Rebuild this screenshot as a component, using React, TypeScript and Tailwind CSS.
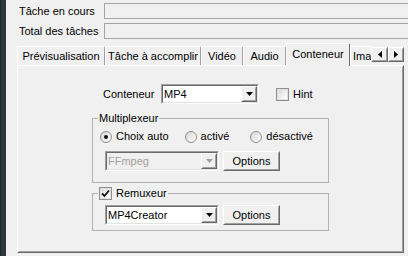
import React from "react";

function Raised({ children, className = "" }: { children?: React.ReactNode; className?: string }) {
  return (
    <div className={"border border-t-white border-l-white border-r-[#696969] border-b-[#696969] bg-[#f0f0f0] " + className}>
      <div className="w-full h-full border border-t-[#f0f0f0] border-l-[#f0f0f0] border-r-[#a0a0a0] border-b-[#a0a0a0] flex items-center justify-center">
        {children}
      </div>
    </div>
  );
}

function Arrow({ dir, color = "#000" }: { dir: "down" | "left" | "right"; color?: string }) {
  if (dir === "down")
    return (
      <svg width="7" height="4" viewBox="0 0 7 4">
        <path d="M0 0H7L3.5 4Z" fill={color} />
      </svg>
    );
  if (dir === "left")
    return (
      <svg width="4" height="7" viewBox="0 0 4 7">
        <path d="M4 0V7L0 3.5Z" fill={color} />
      </svg>
    );
  return (
    <svg width="4" height="7" viewBox="0 0 4 7">
      <path d="M0 0V7L4 3.5Z" fill={color} />
    </svg>
  );
}

function Combo({ value, width, disabled = false }: { value: string; width: string; disabled?: boolean }) {
  return (
    <div className={"h-[20px] border border-t-[#a0a0a0] border-l-[#a0a0a0] border-r-white border-b-white " + width}>
      <div className="h-full border border-t-[#696969] border-l-[#696969] border-r-[#e3e3e3] border-b-[#e3e3e3] flex items-stretch bg-white">
        <div className={"flex-1 flex items-center pl-[1px] " + (disabled ? "text-[#a0a0a0] bg-[#f0f0f0]" : "")}>{value}</div>
        <Raised className="w-[16px]">
          <Arrow dir="down" color={disabled ? "#a0a0a0" : "#000"} />
        </Raised>
      </div>
    </div>
  );
}

function Radio({ checked }: { checked?: boolean }) {
  return (
    <div className="w-[12px] h-[12px] rounded-full border border-[#8e8f8f] bg-gradient-to-br from-[#d6d6d6] to-white flex items-center justify-center">
      {checked && <div className="w-[4px] h-[4px] rounded-full bg-[#111]" />}
    </div>
  );
}

function Check({ checked }: { checked?: boolean }) {
  return (
    <div className="w-[13px] h-[13px] border border-[#8e8f8f] bg-white flex items-center justify-center">
      <div className="w-[11px] h-[11px] border border-[#e0e0e0] bg-gradient-to-br from-[#dcdcdc] to-white flex items-center justify-center">
        {checked && (
          <svg width="9" height="9" viewBox="0 0 9 9">
            <path d="M1 4.5L3.5 7L8 1.5" stroke="#111" strokeWidth="1.8" fill="none" />
          </svg>
        )}
      </div>
    </div>
  );
}

function Tab({ label, w }: { label: string; w: string }) {
  return (
    <div className={"h-[19px] flex items-center justify-center border-t border-l border-r border-t-white border-l-white border-r-[#a0a0a0] rounded-t-[2px] " + w}>
      <span className="whitespace-nowrap">{label}</span>
    </div>
  );
}

export default function App() {
  return (
    <div className="w-[408px] h-[256px] bg-[#f0f0f0] flex overflow-hidden text-[11px] leading-[13px] text-black font-['Liberation_Sans',Arial,sans-serif]">
      <div className="w-[6px] shrink-0 bg-[#2b3641] border-l border-[#1e262e]" />
      <div className="flex-1 flex flex-col pl-[13px] pt-[3px] min-w-0">
        <div className="flex h-[16px] items-center">
          <div className="w-[85px] shrink-0">Tâche en cours</div>
          <div className="flex-1 h-[16px] border border-r-0 border-[#a5a5a5] bg-[#f0f0f0]" />
        </div>
        <div className="flex h-[16px] items-center mt-[4px]">
          <div className="w-[85px] shrink-0">Total des tâches</div>
          <div className="flex-1 h-[16px] border border-r-0 border-[#a5a5a5] bg-[#f0f0f0]" />
        </div>

        <div className="ml-[-2px] w-[387px] mt-[4px] flex flex-col">
          <div className="h-[22px] flex items-end">
            <Tab label="Prévisualisation" w="w-[88px]" />
            <Tab label="Tâche à accomplir" w="w-[96px]" />
            <Tab label="Vidéo" w="w-[42px]" />
            <Tab label="Audio" w="w-[43px]" />
            <div className="relative z-10 mb-[-1px] h-[23px] w-[64px] flex justify-center pt-[4px] border-t border-l border-r border-t-white border-l-white border-r-[#696969] bg-[#f0f0f0] rounded-t-[2px]">
              <span>Conteneur</span>
            </div>
            <div className="h-[19px] w-[21px] flex items-center pl-[2px] border-t border-l border-t-white border-l-white">
              <span className="whitespace-nowrap">Ima</span>
            </div>
            <div className="self-start mt-[4px] flex">
              <Raised className="w-[17px] h-[15px]">
                <Arrow dir="left" />
              </Raised>
              <Raised className="w-[16px] h-[15px]">
                <Arrow dir="right" />
              </Raised>
            </div>
          </div>

          <div className="h-[188px] border border-t-white border-l-white border-r-[#696969] border-b-[#696969]">
            <div className="h-full border border-t-[#f0f0f0] border-l-[#f0f0f0] border-r-[#a0a0a0] border-b-[#a0a0a0] flex flex-col items-center pt-[17px]">
              <div className="w-[237px] flex items-center h-[20px]">
                <div className="ml-[11px] w-[58px]">Conteneur</div>
                <Combo value="MP4" width="w-[98px]" />
                <div className="ml-[17px]">
                  <Check />
                </div>
                <div className="ml-[4px]">Hint</div>
              </div>

              <fieldset className="w-[237px] mt-[8px] border border-[#b4b4b4] pb-[11px]">
                <legend className="ml-[5px] px-[1px]">Multiplexeur</legend>
                <div className="flex items-center mt-[5px] h-[13px] pl-[7px]">
                  <Radio checked />
                  <span className="ml-[4px]">Choix auto</span>
                  <div className="ml-[16px]">
                    <Radio />
                  </div>
                  <span className="ml-[4px]">activé</span>
                  <div className="ml-[21px]">
                    <Radio />
                  </div>
                  <span className="ml-[4px]">désactivé</span>
                </div>
                <div className="flex mt-[8px] pl-[12px]">
                  <Combo value="FFmpeg" width="w-[114px]" disabled />
                  <Raised className="ml-[4px] w-[57px] h-[20px]">Options</Raised>
                </div>
              </fieldset>

              <fieldset className="w-[237px] mt-[4px] border border-[#b4b4b4] pb-[5px]">
                <legend className="ml-[5px] pl-[1px] pr-[1px]">
                  <div className="flex items-center">
                    <Check checked />
                    <span className="ml-[4px]">Remuxeur</span>
                  </div>
                </legend>
                <div className="flex mt-[5px] pl-[12px]">
                  <Combo value="MP4Creator" width="w-[114px]" />
                  <Raised className="ml-[4px] w-[57px] h-[20px]">Options</Raised>
                </div>
              </fieldset>
            </div>
          </div>
        </div>
      </div>
    </div>
  );
}
